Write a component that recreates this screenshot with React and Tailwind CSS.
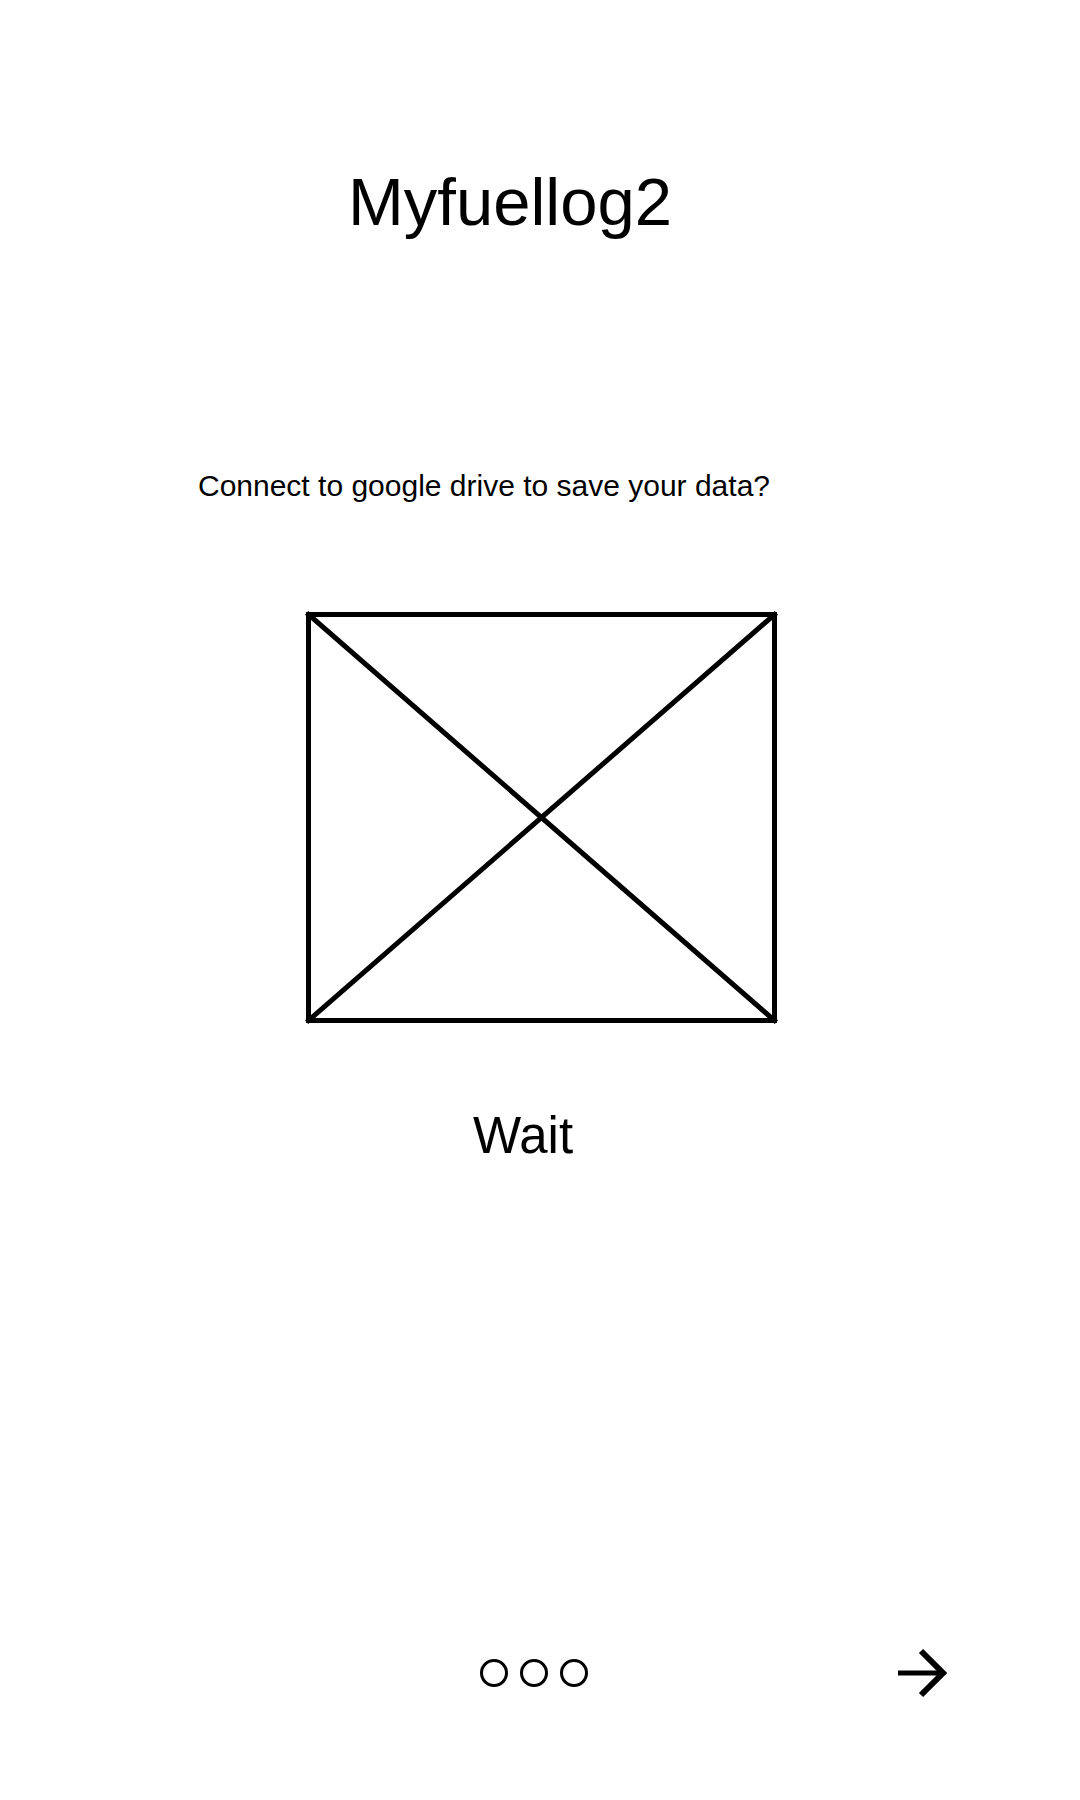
export default function App() {
  return (
    <main className="flex min-h-screen flex-col bg-white font-['Liberation_Sans',Arial,sans-serif] text-black">
      <h1 className="mt-[162px] pr-[60px] text-center text-[67px] leading-[80px]">Myfuellog2</h1>
      <p className="mt-[224px] pr-[112px] text-center text-[30px] leading-[40px]">
        Connect to google drive to save your data?
      </p>
      <svg className="mx-auto mt-[104px] h-[414px] w-[476px]" viewBox="0 0 476 414" fill="none" stroke="black" strokeWidth="5" role="img" aria-label="Image placeholder">
        <rect x="6.5" y="4.5" width="466" height="406" />
        <path d="M6.5 4.5L472.5 410.5M472.5 4.5L6.5 410.5" strokeLinecap="square" />
      </svg>
      <p className="mt-[82px] pr-[34px] text-center text-[51px] leading-[60px]">Wait</p>
      <footer className="mt-auto mb-[102px] grid grid-cols-[1fr_auto_1fr] items-center pr-[132px] pl-[120px]">
        <span />
        <div className="flex gap-3">
          <button aria-label="Step 1" className="size-[28px] rounded-full border-3 border-black" />
          <button aria-label="Step 2" className="size-[28px] rounded-full border-3 border-black" />
          <button aria-label="Step 3" className="size-[28px] rounded-full border-3 border-black" />
        </div>
        <button aria-label="Next" className="justify-self-end">
          <svg className="h-[50px] w-[50px]" viewBox="0 0 50 50" fill="none" stroke="black">
            <path d="M0 25H45" strokeWidth="5" />
            <path d="M23 3L45 25L23 47" strokeWidth="6" />
          </svg>
        </button>
      </footer>
    </main>
  );
}
